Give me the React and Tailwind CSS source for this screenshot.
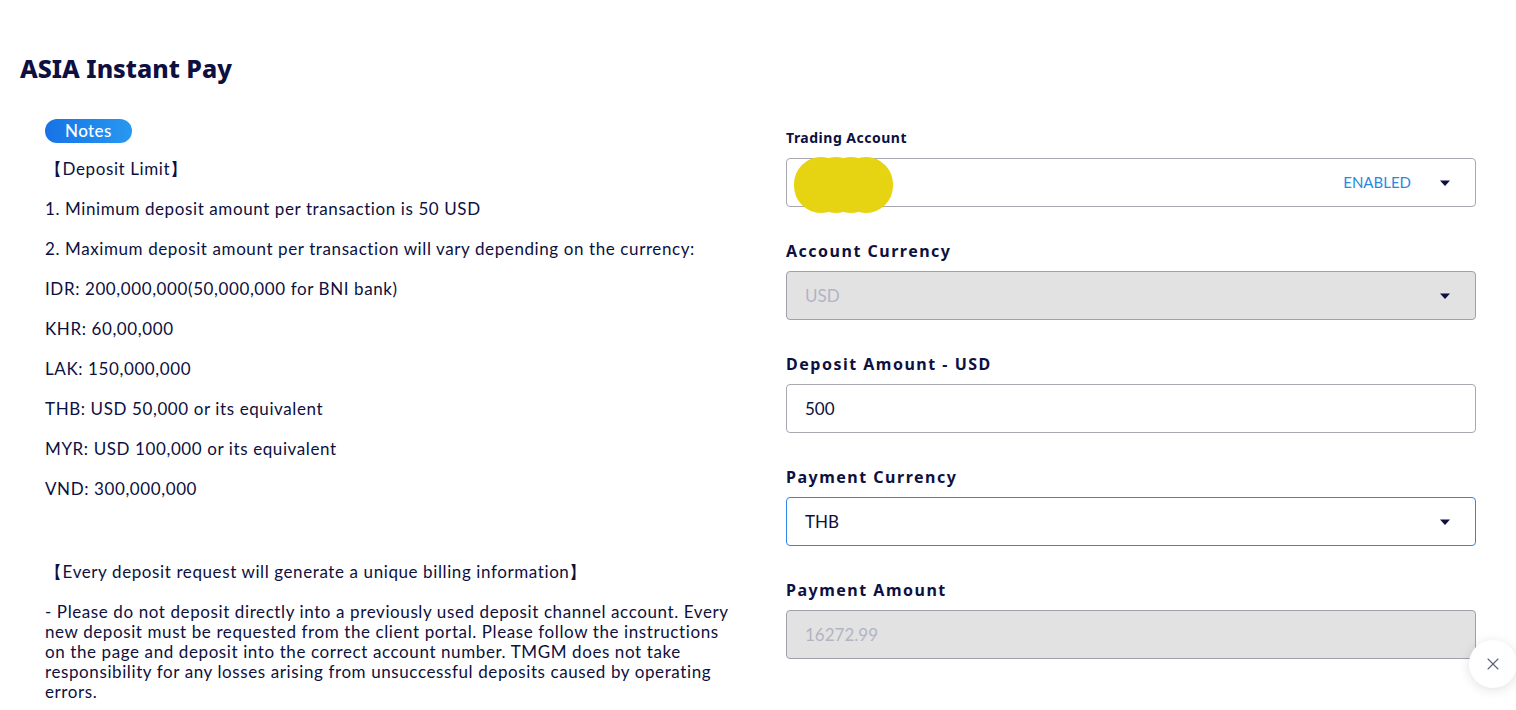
import { X } from 'lucide-react'

const LIMITS = [
  '【Deposit Limit】',
  '1. Minimum deposit amount per transaction is 50 USD',
  '2. Maximum deposit amount per transaction will vary depending on the currency:',
  'IDR: 200,000,000(50,000,000 for BNI bank)',
  'KHR: 60,00,000',
  'LAK: 150,000,000',
  'THB: USD 50,000 or its equivalent',
  'MYR: USD 100,000 or its equivalent',
  'VND: 300,000,000',
]

const HEAD = { fontFamily: '"Noto Sans", Lato, sans-serif' }

function Caret() {
  return (
    <svg width="12" height="8" viewBox="0 0 12 8" className="shrink-0">
      <path d="M1 1.5h10L6 7z" fill="#0d1040" />
    </svg>
  )
}

function Label({ children, small = false }) {
  if (small) {
    return <div style={HEAD} className="text-[14px] leading-5 font-bold text-[#0d1040] tracking-[0.5px]">{children}</div>
  }
  return <div style={HEAD} className="text-[16px] leading-6 font-bold text-[#0d1040] tracking-[1.5px]">{children}</div>
}

function Field({ label, value, disabled = false, focused = false, select = false }) {
  const box = disabled
    ? 'bg-[#e2e2e2] border-[#9fa0a8] text-[#b2b4c4]'
    : focused
      ? 'bg-white border-[#2f86e8] text-[#0d1040]'
      : 'bg-white border-[#a7a8b0] text-[#0d1040]'
  return (
    <div className="mb-8">
      <Label>{label}</Label>
      <div className={`mt-2 h-[49px] rounded-[4px] border flex items-center pl-[18px] pr-[24px] text-[17px] ${box}`}>
        <span className="flex-1">{value}</span>
        {select && <Caret />}
      </div>
    </div>
  )
}

export default function App() {
  return (
    <div className="min-h-[710px] bg-white px-5 pt-[52px] text-[#0d1040] relative overflow-hidden" style={{ fontFamily: 'Lato, "Noto Sans", sans-serif' }}>
      <h1 style={HEAD} className="text-[25px] leading-8 font-extrabold text-[#0d1040]">ASIA Instant Pay</h1>

      <div className="flex mt-[35px]">
        {/* Notes column */}
        <div className="w-[766px] pl-[25px] shrink-0">
          <span className="inline-block h-6 px-5 rounded-full bg-gradient-to-r from-[#1872e6] to-[#2898f0] text-white text-[17px] leading-6 font-medium tracking-[0.4px]">
            Notes
          </span>
          <div className="mt-[6px] text-[17px] tracking-[0.6px] w-[720px]">
            {LIMITS.map((line) => (
              <p key={line} className="leading-10 h-10">{line}</p>
            ))}
            <p className="h-10" />
            <p className="leading-10 h-10 mt-[3px]">【Every deposit request will generate a unique billing information】</p>
            <p className="mt-[10px] leading-5 w-[692px]">
              - Please do not deposit directly into a previously used deposit channel account. Every new deposit must be requested from the client portal. Please follow the instructions on the page and deposit into the correct account number. TMGM does not take responsibility for any losses arising from unsuccessful deposits caused by operating errors.
            </p>
          </div>
        </div>

        {/* Form column */}
        <div className="w-[690px] shrink-0 pt-[9px]">
          <div className="mb-[32px]">
            <Label small>Trading Account</Label>
            <div className="mt-[10px] h-[49px] rounded-[4px] border border-[#a7a8b0] bg-white flex items-center pr-[24px] relative">
              <div className="absolute left-[7px] top-[-2px] flex">
                <span className="w-[54px] h-[56px] rounded-full bg-[#e6d412]" />
                <span className="w-[54px] h-[56px] rounded-full bg-[#e6d412] -ml-[39px]" />
                <span className="w-[54px] h-[56px] rounded-full bg-[#e6d412] -ml-[39px]" />
                <span className="w-[54px] h-[56px] rounded-full bg-[#e6d412] -ml-[39px]" />
              </div>
              <span className="flex-1" />
              <span className="text-[15px] text-[#2a88e0] mr-[28px]">ENABLED</span>
              <Caret />
            </div>
          </div>
          <Field label="Account Currency" value="USD" disabled select />
          <Field label="Deposit Amount - USD" value="500" />
          <Field label="Payment Currency" value="THB" focused select />
          <Field label="Payment Amount" value="16272.99" disabled />
        </div>
      </div>

      <button className="absolute left-[1469px] top-[640px] w-12 h-12 rounded-full bg-white shadow-[0_2px_12px_rgba(0,0,0,0.12)] flex items-center justify-center">
        <X size={20} strokeWidth={1.3} color="#5b5e78" />
      </button>
    </div>
  )
}
